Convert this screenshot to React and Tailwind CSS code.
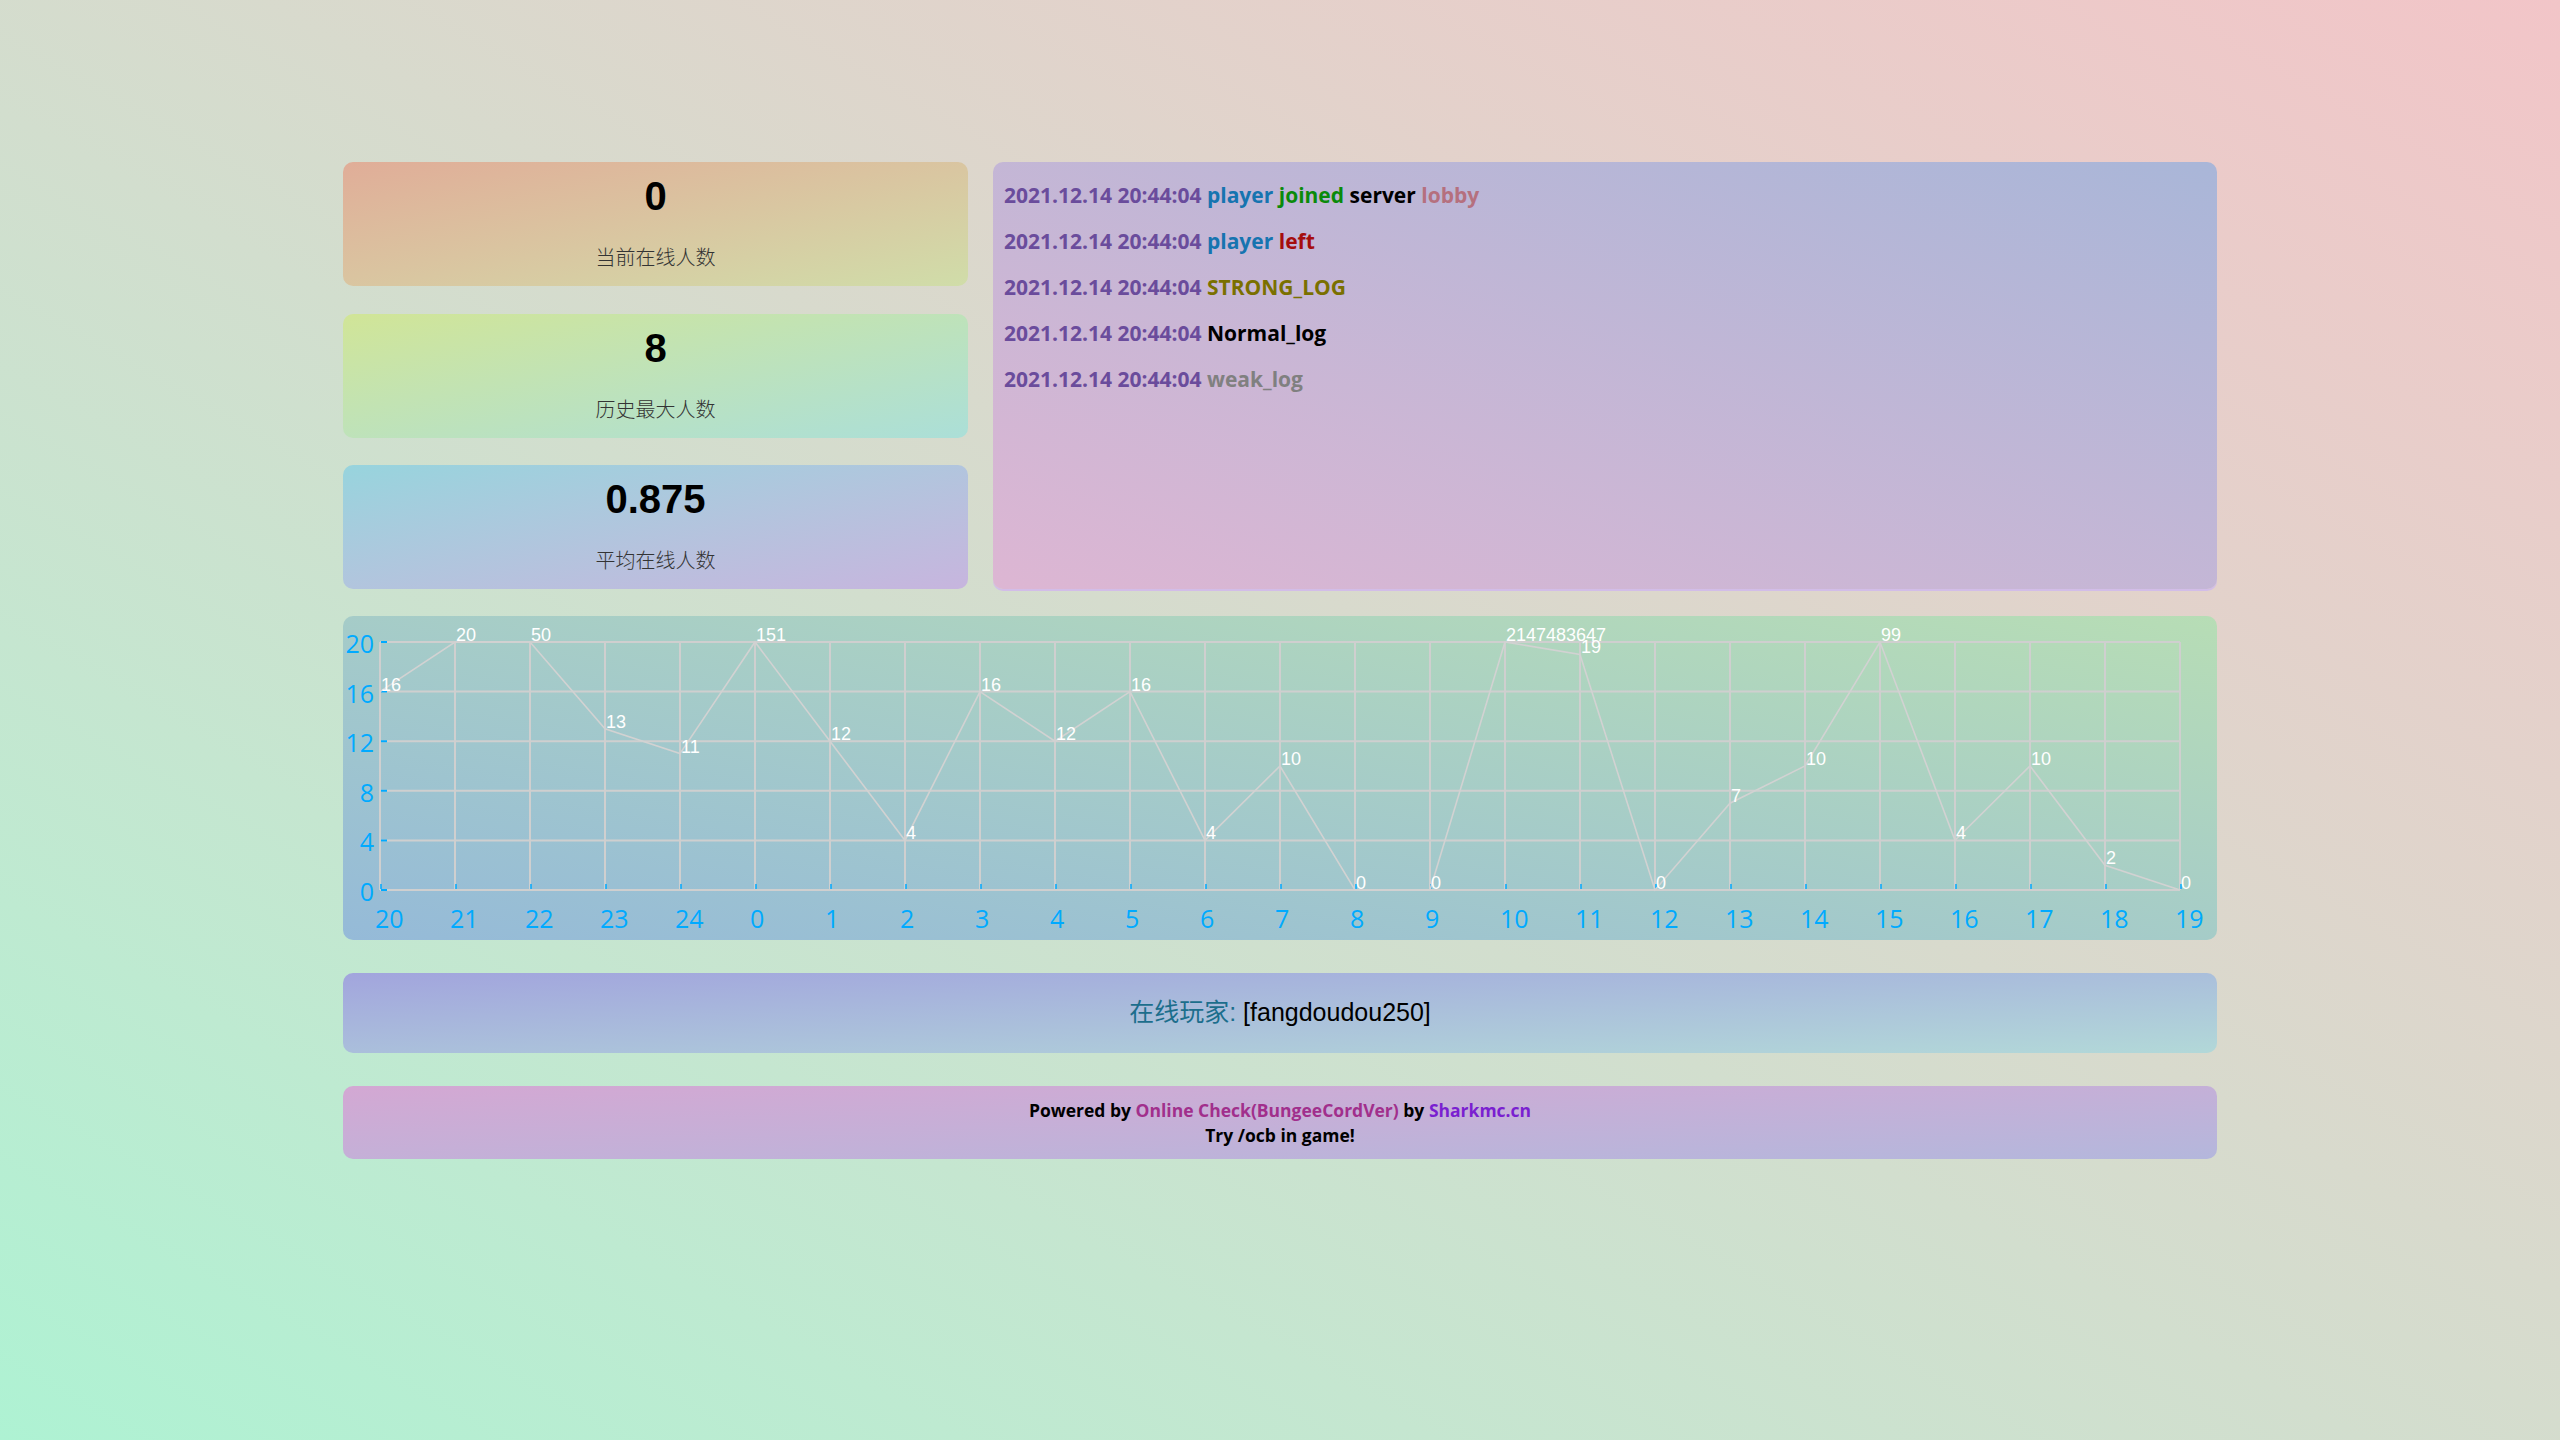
import React from 'react'

// hour labels across the bottom axis, and the value logged for each hour
const HOURS = [20, 21, 22, 23, 24, 0, 1, 2, 3, 4, 5, 6, 7, 8, 9, 10, 11, 12, 13, 14, 15, 16, 17, 18, 19]
const VALUES = [16, 20, 50, 13, 11, 151, 12, 4, 16, 12, 16, 4, 10, 0, 0, 2147483647, 19, 0, 7, 10, 99, 4, 10, 2, 0]
const Y_TICKS = [0, 4, 8, 12, 16, 20]

const TS = '2021.12.14 20:44:04'

// chart geometry (px inside the panel)
const LEFT = 37
const STEP = 75
const TOP = 26
const BOTTOM = 274

const xAt = (i) => LEFT + i * STEP
const yAt = (v) => BOTTOM - (Math.min(v, 20) / 20) * (BOTTOM - TOP)

function StatCard({ value, label, className }) {
  return (
    <div className={`h-[124px] rounded-[10px] flex flex-col items-center pt-[14px] ${className}`}>
      <div className="text-[40px] leading-[40px] font-bold text-black font-['Liberation_Sans',sans-serif]">
        {value}
      </div>
      <div className="mt-[31px] text-[20px] leading-[20px] text-[#333] font-['Noto_Sans_CJK_SC',sans-serif] font-light">
        {label}
      </div>
    </div>
  )
}

function Chart() {
  const right = xAt(HOURS.length - 1)
  const points = VALUES.map((v, i) => `${xAt(i)},${yAt(v)}`).join(' ')

  return (
    <svg className="block" width="1874" height="324" viewBox="0 0 1874 324">
      {/* grid */}
      {Y_TICKS.map((t) => (
        <line key={'h' + t} x1={LEFT} x2={right} y1={yAt(t)} y2={yAt(t)} stroke="#cfcfcf" strokeWidth="2" />
      ))}
      {HOURS.map((h, i) => (
        <line key={'v' + i} x1={xAt(i)} x2={xAt(i)} y1={TOP} y2={BOTTOM} stroke="#cfcfcf" strokeWidth="2" />
      ))}

      {/* axis ticks */}
      {Y_TICKS.map((t) => (
        <line key={'ty' + t} x1={LEFT + 1} x2={LEFT + 7} y1={yAt(t)} y2={yAt(t)} stroke="#0af" strokeWidth="2" />
      ))}
      {HOURS.map((h, i) => (
        <line key={'tx' + i} x1={xAt(i) + 1} x2={xAt(i) + 1} y1={BOTTOM - 6} y2={BOTTOM - 1} stroke="#0af" strokeWidth="1.5" />
      ))}

      {/* y labels */}
      {Y_TICKS.map((t) => (
        <text
          key={'ly' + t}
          x={31}
          y={yAt(t) + 11}
          textAnchor="end"
          fontSize="25"
          fill="#0af"
          fontFamily="'Open Sans', sans-serif"
        >
          {t}
        </text>
      ))}

      {/* x labels */}
      {HOURS.map((h, i) => (
        <text
          key={'lx' + i}
          x={xAt(i) - 5}
          y={312}
          fontSize="25"
          fill="#0af"
          fontFamily="'Open Sans', sans-serif"
        >
          {h}
        </text>
      ))}

      {/* data line */}
      <polyline points={points} fill="none" stroke="#d2d2d2" strokeWidth="1.6" />

      {VALUES.map((v, i) => (
        <text
          key={'d' + i}
          x={xAt(i) + 1}
          y={yAt(v) - 1}
          fontSize="18"
          fill="#fff"
          fontFamily="'Liberation Sans', Arial, sans-serif"
        >
          {v}
        </text>
      ))}
    </svg>
  )
}

export default function App() {
  return (
    <div className="min-h-screen w-full bg-linear-to-tr from-[#aef2d3] to-[#f2c5c8]">
      <div className="w-[1874px] mx-auto pt-[162px] pb-10">
        {/* top row: stats + log */}
        <div className="flex gap-[25px]">
          <div className="w-[625px] flex flex-col gap-[27.5px]">
            <StatCard value="0" label="当前在线人数" className="bg-linear-to-br from-[#e0ad98] to-[#d0dda9]" />
            <StatCard value="8" label="历史最大人数" className="bg-linear-to-br from-[#d1e597] to-[#abdfd8]" />
            <StatCard value="0.875" label="平均在线人数" className="bg-linear-to-br from-[#97d4dd] to-[#c7b5de]" />
          </div>

          <div className="flex-1 rounded-[10px] bg-linear-to-tr from-[#ddb6d3] to-[#a9b6d8] shadow-[0_2px_0_#d2bde8] pt-[10px] pl-[11px] text-[21px] leading-[46px] font-bold font-['Open_Sans',sans-serif]">
            <div>
              <span className="text-[#6a4c9c]">{TS}</span>{' '}
              <span className="text-[#1674b0]">player</span>{' '}
              <span className="text-[#0a8a0a]">joined</span>{' '}
              <span className="text-black">server</span>{' '}
              <span className="text-[#b5707e]">lobby</span>
            </div>
            <div>
              <span className="text-[#6a4c9c]">{TS}</span>{' '}
              <span className="text-[#1674b0]">player</span>{' '}
              <span className="text-[#a50d0d]">left</span>
            </div>
            <div>
              <span className="text-[#6a4c9c]">{TS}</span>{' '}
              <span className="text-[#7a7000]">STRONG_LOG</span>
            </div>
            <div>
              <span className="text-[#6a4c9c]">{TS}</span>{' '}
              <span className="text-black">Normal_log</span>
            </div>
            <div>
              <span className="text-[#6a4c9c]">{TS}</span>{' '}
              <span className="text-[#808080]">weak_log</span>
            </div>
          </div>
        </div>

        {/* hourly chart */}
        <div className="mt-[27px] h-[324px] rounded-[10px] overflow-hidden bg-linear-to-tr from-[#95bad8] to-[#b7ddb5]">
          <Chart />
        </div>

        {/* online players */}
        <div className="mt-[33px] h-[80px] rounded-[10px] bg-linear-to-br from-[#a2a5dd] to-[#b2d8d8] flex items-center justify-center text-[25px] font-['Liberation_Sans','Noto_Sans_CJK_SC',sans-serif]">
          <span className="text-[#1c6e8c]">在线玩家:</span>
          <span className="text-black">&nbsp;[fangdoudou250]</span>
        </div>

        {/* footer */}
        <div className="mt-[33px] h-[73px] rounded-[10px] bg-linear-to-br from-[#d3a8d3] to-[#b4b7dc] flex flex-col items-center justify-center text-[17.5px] leading-[25px] font-bold text-black font-['Open_Sans',sans-serif]">
          <div>
            Powered by <span className="text-[#a12f8c]">Online Check(BungeeCordVer)</span> by{' '}
            <span className="text-[#7a1fd0]">Sharkmc.cn</span>
          </div>
          <div>Try /ocb in game!</div>
        </div>
      </div>
    </div>
  )
}
